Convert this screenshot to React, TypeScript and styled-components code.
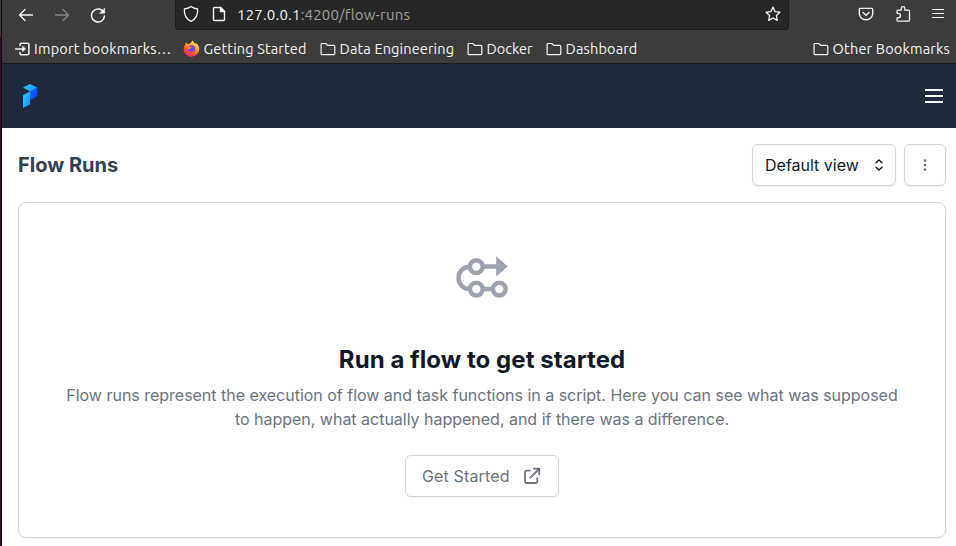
import React from "react";
import styled, { createGlobalStyle, css } from "styled-components";

const Global = createGlobalStyle`
  *, *::before, *::after { box-sizing: border-box; }
  body { margin: 0; background: #fff; overflow: hidden; }
  h1, h2, p { margin: 0; }
  button { font: inherit; cursor: pointer; }
  svg { display: block; flex: none; }
`;

const Window = styled.div`
  display: grid;
  grid-template-columns: 2px 1fr;
  width: 956px;
  height: 546px;
  overflow: hidden;
`;

const Edge = styled.div`
  border-right: 1px solid #150811;
  background: linear-gradient(#3c3c3c 0 37px, #360a29 37px);
`;

const Screen = styled.div`
  display: flex;
  flex-direction: column;
  min-width: 0;
`;

const Chrome = styled.header`
  height: 64px;
  background: #3c3c3c;
  border-bottom: 1px solid #191919;
  color: #f4f4f4;
  font: 14.5px/20px Ubuntu, "Noto Sans", sans-serif;
`;

const Toolbar = styled.div`
  display: flex;
  height: 34px;
  padding: 0 11px 4px 16px;
  align-items: flex-start;
`;

const Navigation = styled.div`
  display: flex;
  align-items: center;
  gap: 20px;
  width: 157px;
  height: 30px;
`;

const Actions = styled.div`
  display: flex;
  align-items: center;
  gap: 20.5px;
  height: 28px;
  margin-left: auto;
`;

const AddressBar = styled.div`
  display: flex;
  align-items: center;
  width: 614px;
  height: 30px;
  padding: 0 7px 1px 7px;
  background: #272727;
  border: 1px solid #1c1c1c;
  border-top: 0;
  border-radius: 0 0 4px 4px;
`;

const AddressIcons = styled.div`
  display: flex;
  align-items: center;
  gap: 13px;
  width: 54px;
`;

const Label = styled.span<{ $spacing?: number; $muted?: boolean }>`
  white-space: pre;
  letter-spacing: ${(p) => p.$spacing ?? 0.14}px;
  ${(p) => p.$muted && css`color: #a0a0a0;`}
`;

const Url = styled.div`
  flex: 1;
  display: flex;
  padding-top: 1px;
  font-size: 15px;
`;

const BookmarksBar = styled.nav`
  display: flex;
  height: 29px;
  padding: 0 0 0 12px;
`;

const Bookmark = styled.a<{ $width: number; $gap?: number; $end?: boolean }>`
  display: flex;
  align-items: center;
  gap: ${(p) => p.$gap ?? 4}px;
  width: ${(p) => p.$width}px;
  margin-left: ${(p) => (p.$end ? "auto" : "0")};
`;

const AppBar = styled.div`
  display: flex;
  align-items: center;
  justify-content: space-between;
  height: 64px;
  padding: 0 12px 0 20px;
  background: #1f2a3c;
`;

const Page = styled.main`
  display: flex;
  flex-direction: column;
  gap: 16px;
  padding: 16px 10px 0 16px;
  font: 16px/24px Inter, sans-serif;
  color: #111827;
`;

const PageHeader = styled.div`
  display: flex;
  align-items: center;
  gap: 8px;
  height: 42px;
`;

const PageTitle = styled.h1`
  flex: 1;
  font-size: 20px;
  line-height: 28px;
  font-weight: 700;
  color: #334155;
`;

const Button = styled.button<{ $width: number; $muted?: boolean }>`
  display: flex;
  align-items: center;
  justify-content: space-between;
  width: ${(p) => p.$width}px;
  height: 42px;
  padding: 0 11px 0 12px;
  background: #fff;
  border: 1px solid #d1d5db;
  border-radius: 6px;
  box-shadow: 0 1px 2px rgba(0, 0, 0, 0.05);
  color: ${(p) => (p.$muted ? "#6b7280" : "#111827")};
`;

const IconButton = styled(Button)`
  justify-content: center;
  padding: 0;
`;

const GetStarted = styled(Button)`
  margin-top: 23px;
  padding: 0 16px;
  letter-spacing: 0.15px;
`;

const Card = styled.section`
  display: flex;
  flex-direction: column;
  align-items: center;
  height: 336px;
  padding: 47px 32px 0;
  border: 1px solid #d1d5db;
  border-radius: 8px;
  box-shadow: 0 1px 2px rgba(0, 0, 0, 0.05);
  text-align: center;
`;

const CardTitle = styled.h2`
  margin: 38px 0 7px;
  font-size: 24px;
  line-height: 32px;
  font-weight: 700;
  letter-spacing: 0.06px;
`;

const CardText = styled.p`
  width: 840px;
  margin-bottom: 1px;
  letter-spacing: -0.015px;
  color: #6b7280;
`;

const line = { fill: "none", stroke: "currentColor", strokeLinecap: "round", strokeLinejoin: "round" } as const;

const Arrow = ({ back }: { back?: boolean }) => (
  <svg width="16" height="16" viewBox="0 0 16 16" {...line} strokeWidth="1.3" color={back ? "#f4f4f4" : "#848484"}>
    <path d={back ? "M14.5 8H1.8M7 2.5 1.5 8 7 13.5" : "M1.5 8h12.7M9 2.5 14.5 8 9 13.5"} />
  </svg>
);

const Reload = () => (
  <svg width="16" height="16" viewBox="0 0 16 16" {...line} strokeWidth="1.5">
    <path d="M13.6 5.2A6.5 6.5 0 1 0 14.5 9" />
    <path d="M14.6 1.4v4.8H9.8z" fill="currentColor" strokeWidth=".6" />
  </svg>
);

const Shield = () => (
  <svg width="16" height="18" viewBox="0 0 16 18" {...line} strokeWidth="1.3">
    <path d="M8 1.500c2 1.500 4.200 2.200 6.600 2.500C15 9 12.800 14 8 16.400 3.200 14 1 9 1.400 4 3.800 3.700 6 3 8 1.500z" />
  </svg>
);

const PageIcon = () => (
  <svg width="14" height="16" viewBox="0 0 14 16" {...line} strokeWidth="1.4">
    <path d="M2.500 1.500h6l4 4v8q0 1-1 1h-9q-1 0-1-1v-11q0-1 1-1z" />
    <path d="M8.500 1.500v4h4z" fill="currentColor" />
  </svg>
);

const Star = () => (
  <svg width="16" height="16" viewBox="0 0 16 16" {...line} strokeWidth="1.3">
    <path d="m8 1.200 2.100 4.400 4.800.6-3.500 3.300.9 4.900L8 12l-4.300 2.400.9-4.900L1.100 6.200l4.800-.6z" />
  </svg>
);

const Pocket = () => (
  <svg width="16" height="16" viewBox="0 0 16 16" {...line} strokeWidth="1.4">
    <path d="M2.400 2.400h11.200q1.100 0 1.100 1.100V7.500a6.700 6.300 0 0 1-13.400 0v-4q0-1.100 1.100-1.100z" />
    <path d="m5 6.400 3 2.900 3-2.900" />
  </svg>
);

const Puzzle = () => (
  <svg width="16" height="18" viewBox="0 0 16 18" {...line} strokeWidth="1.300">
    <path d="M2 8V6.200q0-1 1-1h3.200V3.500a1.800 1.800 0 0 1 3.600 0v1.700h3.700q1 0 1 1v9q0 1-1 1H3q-1 0-1-1v-2.300h1.200a2.300 2.300 0 0 0 0-4.600z" />
  </svg>
);

const Menu = () => (
  <svg width="14" height="12" viewBox="0 0 14 12" {...line} strokeWidth="1.200">
    <path d="M1.500 1.500h11M1.500 5.500h11M1.500 9.500h11" />
  </svg>
);

const Import = () => (
  <svg width="18" height="16" viewBox="0 0 18 16" {...line} strokeWidth="1.500">
    <path d="M6 4.500V3.500q0-1.300 1.300-1.300h6.200q1.400 0 1.400 1.300v9q0 1.300-1.400 1.300H7.300Q6 13.800 6 12.500v-1M1.700 8H9" />
    <path d="M8.500 5.200v5.600L11.500 8z" fill="currentColor" strokeWidth=".5" />
  </svg>
);

const Folder = () => (
  <svg width="16" height="16" viewBox="0 0 16 16" {...line} strokeWidth="1.200">
    <path d="M1.100 12.900V3.500q0-1 1-1h3.600l2 1.900h6q1.100 0 1.100 1.100v7q0 1.100-1.100 1.100H1.900q-.8 0-.8-.7z" />
  </svg>
);

const Firefox = () => (
  <svg width="17" height="17" viewBox="0 0 17 17">
    <defs>
      <linearGradient id="flame" x1=".8" y1="0" x2=".25" y2="1">
        <stop offset="0.100" stopColor="#fff044" />
        <stop offset=".4" stopColor="#ffa02c" />
        <stop offset=".7" stopColor="#ff4b3c" />
        <stop offset="1" stopColor="#e62a7c" />
      </linearGradient>
    </defs>
    <path d="M3.200 2.200 4.400 4l2.500-.2C8 2.800 8.500 1.600 10 .5c.2 1.700 1 2 2 2.900l.8-.4c2.200 1.500 3.600 3.800 3.500 6.300A7.800 7.500 0 0 1 .7 9.200C.6 6.500 1.800 5.500 3.200 2.200z" fill="url(#flame)" />
    <path d="M5.800 6.500c1-1.700 4.800-2 6 .3 1.300 2.700-.5 5.300-3.200 5.300-2.300 0-3.800-1.600-3.700-3.400 1 .8 2.500.4 3.400-.9z" fill="#7542e5" />
    <path d="m4 5.400 2.300 1 2.700.3c-.3 1.200-1.700 1.200-2 2.200-1.200.4-2-.2-2.100-.2z" fill="#ff8c30" />
  </svg>
);

const Logo = () => (
  <svg width="16" height="26" viewBox="0 0 16 26">
    <defs>
      <linearGradient id="cyan" x1="0" y1="0" x2="1" y2="1">
        <stop offset="0" stopColor="#2fd0ff" />
        <stop offset="1" stopColor="#168bff" />
      </linearGradient>
      <linearGradient id="blue" x1="0" y1="0" x2="1" y2="1">
        <stop offset="0" stopColor="#0a6cff" />
        <stop offset="1" stopColor="#0347ff" />
      </linearGradient>
    </defs>
    <path d="M8 8.300 15.300 4.500v8.700L8 17z" fill="url(#blue)" />
    <path d="M1 4.600 8 1l7.300 3.500L8 8.500z" fill="url(#cyan)" />
    <path d="M1 12.200 8 8.500v12.700L1 25z" fill="url(#cyan)" />
  </svg>
);

const NavMenu = () => (
  <svg width="20" height="16" viewBox="0 0 20 16" fill="none" stroke="#fff" strokeWidth="2">
    <path d="M1 2h18M1 8h18M1 14h18" />
  </svg>
);

const Selector = () => (
  <svg width="10" height="14" viewBox="0 0 10 14" {...line} strokeWidth="1.500">
    <path d="M2 4.700 5 2l3 2.700M2 9.300 5 12l3-2.700" />
  </svg>
);

const Dots = () => (
  <svg width="16" height="16" viewBox="0 0 16 16" fill="currentColor">
    <circle cx="8" cy="3.500" r="1.350" />
    <circle cx="8" cy="8" r="1.350" />
    <circle cx="8" cy="12.500" r="1.350" />
  </svg>
);

const FlowIcon = () => (
  <svg width="54" height="56" viewBox="0 0 54 56" fill="none" stroke="#9ca3af" strokeWidth="4.400">
    <path d="M15 16.800h-.5a11 11.100 0 0 0 0 22.200H15M28 16.500h14M28 39h10" />
    <circle cx="21.300" cy="16.600" r="6.400" />
    <circle cx="21.300" cy="39.100" r="6.400" />
    <circle cx="44.300" cy="39.100" r="6.400" />
    <path d="M41.200 6.200v20.200L52.700 16.400z" fill="#9ca3af" stroke="none" />
  </svg>
);

const External = () => (
  <svg width="20" height="20" viewBox="0 0 20 20" fill="none" stroke="currentColor" strokeWidth="1.800" strokeLinejoin="round">
    <path d="M8.500 4.700H4.500q-1.500 0-1.500 1.500v9.300Q3 17 4.500 17h9.300q1.500 0 1.500-1.500V11.500M7.800 12.200 17 3M11.300 2.700H17.300V8.700" />
  </svg>
);

const bookmarks = [
  { label: "Getting Started", width: 137, icon: <Firefox /> },
  { label: "Data Engineering", width: 147, icon: <Folder /> },
  { label: "Docker", width: 79, icon: <Folder />, spacing: -0.05 },
  { label: "Dashboard", width: 100, icon: <Folder /> },
];

export default function App() {
  return (
    <Window>
      <Global />
      <Edge />
      <Screen>
        <Chrome>
          <Toolbar>
            <Navigation>
              <Arrow back />
              <Arrow />
              <Reload />
            </Navigation>
            <AddressBar>
              <AddressIcons>
                <Shield />
                <PageIcon />
              </AddressIcons>
              <Url>
                <Label $spacing={0.2}>127.0.0.1</Label>
                <Label $muted $spacing={0.18}>
                  :4200/flow-runs
                </Label>
              </Url>
              <Star />
            </AddressBar>
            <Actions>
              <Pocket />
              <Puzzle />
              <Menu />
            </Actions>
          </Toolbar>
          <BookmarksBar>
            <Bookmark $width={168.6} $gap={2}>
              <Import />
              <Label $spacing={0.2}>Import bookmarks…</Label>
            </Bookmark>
            {bookmarks.map((b) => (
              <Bookmark key={b.label} $width={b.width}>
                {b.icon}
                <Label $spacing={b.spacing}>{b.label}</Label>
              </Bookmark>
            ))}
            <Bookmark $width={143.4} $end>
              <Folder />
              <Label $spacing={0.18}>Other Bookmarks</Label>
            </Bookmark>
          </BookmarksBar>
        </Chrome>
        <AppBar>
          <Logo />
          <NavMenu />
        </AppBar>
        <Page>
          <PageHeader>
            <PageTitle>Flow Runs</PageTitle>
            <Button $width={144}>
              Default view
              <Selector />
            </Button>
            <IconButton $width={42} $muted>
              <Dots />
            </IconButton>
          </PageHeader>
          <Card>
            <FlowIcon />
            <CardTitle>Run a flow to get started</CardTitle>
            <CardText>
              Flow runs represent the execution of flow and task functions in a script. Here you can see what was
              supposed to happen, what actually happened, and if there was a difference.
            </CardText>
            <GetStarted $width={154} $muted>
              Get Started
              <External />
            </GetStarted>
          </Card>
        </Page>
      </Screen>
    </Window>
  );
}
